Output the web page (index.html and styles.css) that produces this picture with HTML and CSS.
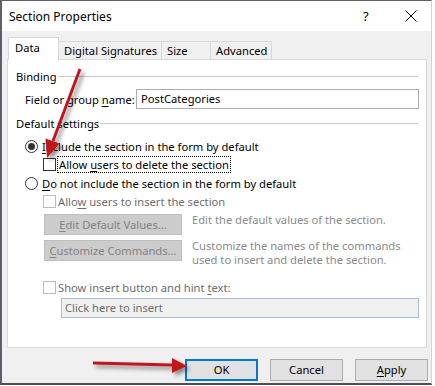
FILE: index.html
```html
<!DOCTYPE html>
<html lang="en">
<head>
    <meta charset="UTF-8">
    <title>Section Properties</title>
    <link rel="stylesheet" href="styles.css">
</head>
<body>
    <div class="window">
        <div class="titlebar">
            <span class="title">Section Properties</span>
            <span class="help">?</span>
            <span class="close">
                <svg width="12" height="12" viewBox="0 0 12 12"><path d="M0.5 0.5 L11.5 11.5 M11.5 0.5 L0.5 11.5" stroke="#000" stroke-width="1"/></svg>
            </span>
        </div>

        <div class="tabs">
            <div class="tab active">Data</div>
            <div class="tab">Digital Signatures</div>
            <div class="tab">Size</div>
            <div class="tab">Advanced</div>
        </div>

        <div class="panel">
            <div class="group-title">Binding</div>
            <div class="field-row">
                <span class="field-label">Field or group <u>n</u>ame:</span>
                <div class="textbox">PostCategories</div>
            </div>

            <div class="group-title settings">Default settings</div>
            <div class="option radio-row">
                <span class="radio checked"></span>
                <span><u>I</u>nclude the section in the form by default</span>
            </div>
            <div class="option check-row">
                <span class="checkbox"></span>
                <span class="focus">Allow <u>u</u>sers to delete the section</span>
            </div>
            <div class="option radio-row second">
                <span class="radio"></span>
                <span><u>D</u>o not include the section in the form by default</span>
            </div>
            <div class="option check-row disabled">
                <span class="checkbox"></span>
                <span>Allo<u>w</u> users to insert the section</span>
            </div>

            <div class="cmd-row first">
                <div class="btn-disabled"><u>E</u>dit Default Values...</div>
                <div class="cmd-desc">Edit the default values of the section.</div>
            </div>
            <div class="cmd-row">
                <div class="btn-disabled"><u>C</u>ustomize Commands...</div>
                <div class="cmd-desc">
                    <div>Customize the names of the commands</div>
                    <div>used to insert and delete the section.</div>
                </div>
            </div>

            <div class="option check-row disabled hint">
                <span class="checkbox"></span>
                <span>Show insert button and hint <u>t</u>ext:</span>
            </div>
            <div class="hint-box">Click here to insert</div>
        </div>

        <div class="buttons">
            <div class="btn default">OK</div>
            <div class="btn">Cancel</div>
            <div class="btn"><u>A</u>pply</div>
        </div>
    </div>

    <!-- annotation arrows drawn over the dialog -->
    <svg class="arrows" width="435" height="386" viewBox="0 0 435 386">
        <defs>
            <filter id="shadow" x="-50%" y="-50%" width="200%" height="200%">
                <feDropShadow dx="3" dy="3" stdDeviation="2" flood-color="#000" flood-opacity="0.45"/>
            </filter>
        </defs>
        <g filter="url(#shadow)" fill="#c0161e" stroke="#c0161e">
            <line x1="80" y1="69" x2="53" y2="141" stroke-width="3"/>
            <polygon points="47,158 45.5,138.5 59.5,143.5" stroke="none"/>
            <line x1="93" y1="363" x2="172" y2="365" stroke-width="3"/>
            <polygon points="187,366 172,358 172,373" stroke="none"/>
        </g>
    </svg>
</body>
</html>
```

FILE: styles.css
```css
body {
    margin: 0;
    background: #fff;
    font-family: "Noto Sans", "Open Sans", sans-serif;
    font-size: 11.2px;
    color: #000;
    white-space: nowrap;
}
u {
    text-decoration: underline;
    text-underline-offset: 2px;
}
.window {
    position: relative;
    width: 429px;
    height: 382px;
    background: #f0f0f0;
    border-left: 2px solid #5d6167;
    border-top: 1px solid #5d6167;
    border-bottom: 2px solid #4c5056;
    border-right: 1px solid #d4d4d4;
}
.titlebar {
    height: 30px;
    background: #fff;
    display: flex;
    align-items: center;
    padding-left: 7px;
    font-size: 12px;
}
.title {
    flex: 1;
}
.help {
    width: 12px;
    margin-right: 30px;
    font-size: 13px;
}
.close {
    display: flex;
    margin-right: 14px;
}
.tabs {
    display: flex;
    align-items: flex-end;
    padding-left: 6px;
    margin-top: 7px;
    height: 21px;
}
.tab {
    height: 17px;
    line-height: 17px;
    padding: 0 0 0 5px;
    border: 1px solid #d9d9d9;
    border-bottom: none;
    margin-left: -1px;
    background: #f0f0f0;
}
.tab.active {
    width: 43px;
    height: 22px;
    line-height: 20px;
    padding: 0 0 0 6px;
    margin-left: 0;
    margin-bottom: -1px;
    background: #fff;
    position: relative;
    z-index: 1;
}
.tabs .tab:nth-child(2) {
    width: 97px;
}
.tabs .tab:nth-child(3) {
    width: 43px;
}
.tabs .tab:nth-child(4) {
    width: 55px;
}
.panel {
    margin-left: 5px;
    width: 402px;
    height: 279px;
    background: #fff;
    border: 1px solid #d9d9d9;
    padding: 8px 8px 0 8px;
}
.group-title {
    display: flex;
    align-items: center;
    height: 16px;
}
.group-title::after {
    content: "";
    flex: 1;
    border-top: 1px solid #c8c8c8;
    margin-left: 1px;
}
.group-title.settings {
    margin-top: 6px;
}
.field-row {
    display: flex;
    align-items: center;
    margin-top: 5px;
    padding-left: 9px;
}
.field-label {
    width: 111px;
}
.textbox {
    flex: 1;
    height: 18px;
    line-height: 18px;
    border: 1px solid #acacac;
    padding-left: 4px;
    margin-right: -1px;
}
.option {
    display: flex;
    align-items: center;
    height: 16px;
}
.radio-row {
    margin-top: 7px;
    padding-left: 9px;
}
.radio-row.second {
    margin-top: 3px;
}
.check-row {
    margin-top: 2px;
    padding-left: 27px;
}
.radio {
    width: 11px;
    height: 11px;
    border: 1px solid #333;
    border-radius: 50%;
    margin-right: 4px;
    display: flex;
    align-items: center;
    justify-content: center;
    background: #fff;
}
.radio.checked::after {
    content: "";
    width: 7px;
    height: 7px;
    border-radius: 50%;
    background: #333;
}
.checkbox {
    width: 11px;
    height: 11px;
    border: 1px solid #333;
    background: #fff;
    margin-right: 2px;
}
.focus {
    outline: 1px dotted #000;
    padding: 0 1px;
    line-height: 15px;
}
.disabled {
    color: #6d6d6d;
}
.disabled .checkbox {
    border-color: #bcbcbc;
}
.cmd-row {
    display: flex;
    height: 21px;
    margin-top: 5px;
    padding-left: 28px;
}
.btn-disabled {
    width: 136px;
    height: 19px;
    line-height: 19px;
    background: #cccccc;
    border: 1px solid #bfbfbf;
    color: #838383;
    text-align: center;
    flex-shrink: 0;
}
.cmd-desc {
    margin-left: 10px;
    margin-top: -1px;
    color: #8a8a8a;
    line-height: 14px;
}
.check-row.hint {
    margin-top: 18px;
}
.hint-box {
    margin: 3px -1px 0 45px;
    height: 18px;
    line-height: 18px;
    border: 1px solid #a8bcd8;
    background: #f0f0f0;
    color: #6d6d6d;
    padding-left: 3px;
}
.buttons {
    display: flex;
    justify-content: flex-end;
    gap: 12px;
    margin-top: 11px;
    padding-right: 3px;
}
.btn {
    width: 71px;
    height: 20px;
    line-height: 20px;
    text-align: center;
    background: #e1e1e1;
    border: 1px solid #adadad;
}
.btn.default {
    border: 2px solid #0078d7;
    width: 69px;
    height: 18px;
    line-height: 18px;
}
.arrows {
    position: absolute;
    left: 0;
    top: 0;
}
```
